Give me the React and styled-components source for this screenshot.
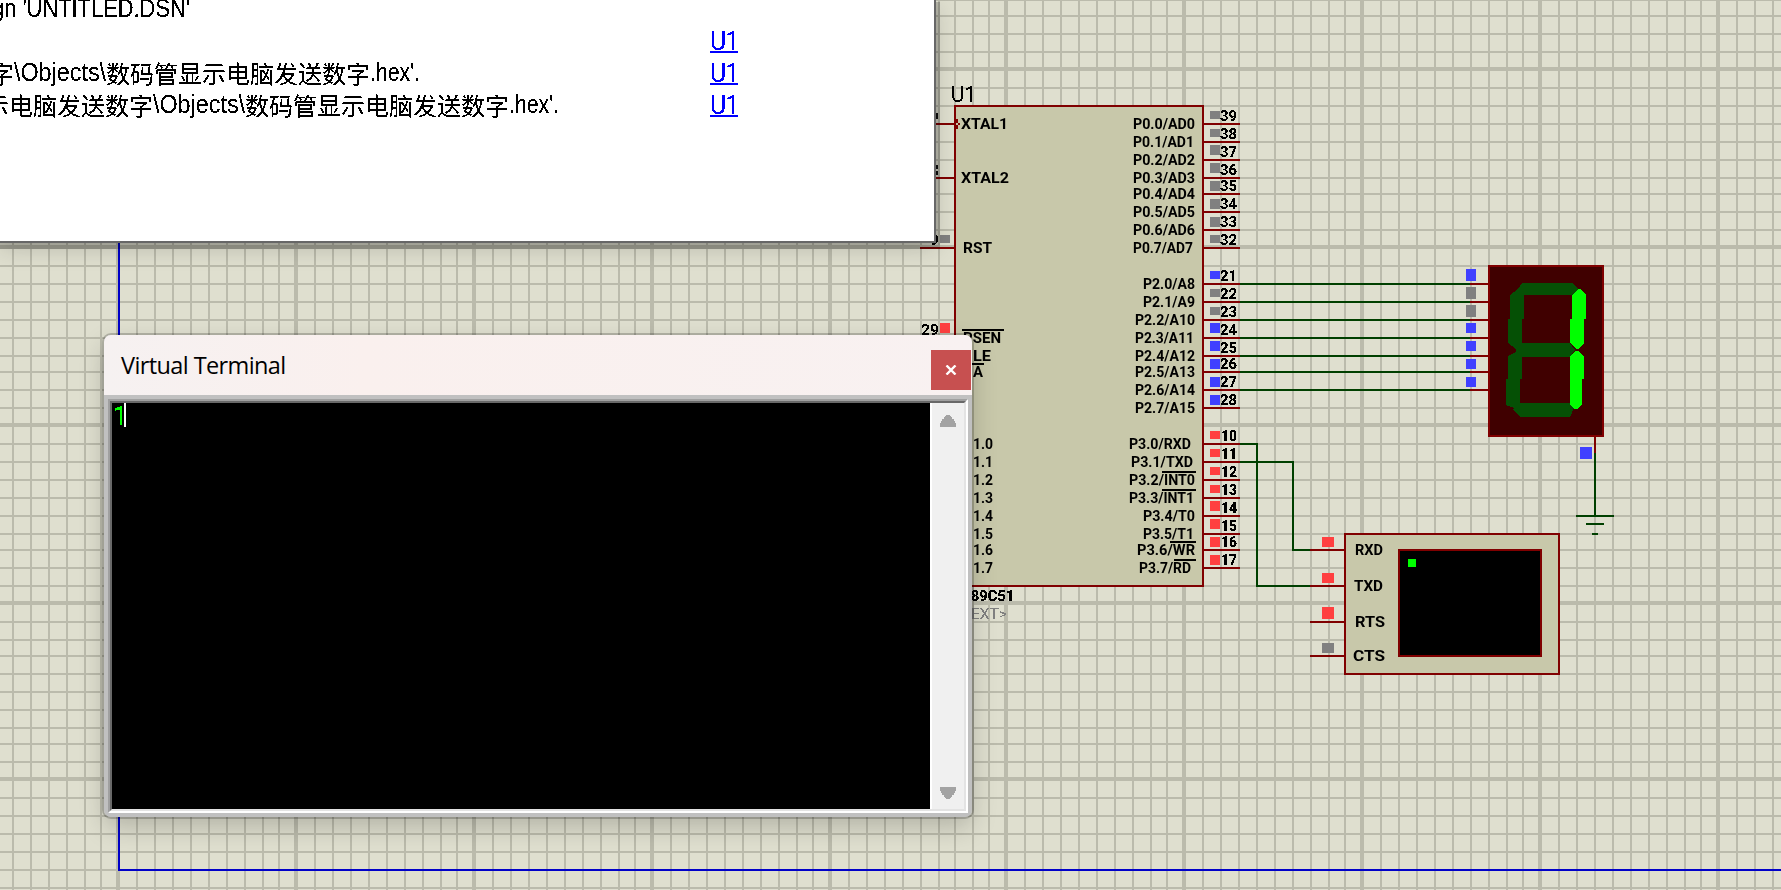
import React from "react";
import styled, { createGlobalStyle } from "styled-components";

const GlobalStyle = createGlobalStyle`
  html, body { margin: 0; padding: 0; overflow: hidden; background: #dfdfcf; }
`;

const MAROON = "#800000";
const WIRE = "#004000";
const BODY = "#c8c8aa";
const STATE = { r: "#ff4040", b: "#4040ff", g: "#808080" };

const Desktop = styled.main`
  position: relative;
  width: 1781px;
  height: 890px;
  overflow: hidden;
  background: #dfdfcf;
`;

const Sheet = styled.svg`
  display: block;
  shape-rendering: crispEdges;
`;

const Label = styled.text`
  font-family: Roboto, "Liberation Sans", sans-serif;
  font-size: ${(p) => p.$size || 14}px;
  font-weight: ${(p) => (p.$light ? 400 : 700)};
  fill: ${(p) => p.$color || "#000"};
`;

/* ---------- grid ---------- */
const MINOR = [19, 37, 55, 73, 91, 109, 127, 145, 161];
const MINOR_Y = [19, 37, 55, 73, 91, 109, 125, 143, 161];
const COLUMNS = [-60, 118, 296, 474, 652, 830, 1006, 1184, 1362, 1540, 1718].map((at) => ({
  at,
  minor: at === 830 ? [19, 37, 55, 73, 91, 109, 125, 143, 159] : MINOR,
}));
const ROWS = [-109, 69, 247, 425, 603, 779].map((at) => ({
  at,
  minor: at === 603 ? [19, 37, 53, 71, 89, 107, 125, 141, 159] : MINOR_Y,
}));

const Grid = () => (
  <g fill="#bbbbac">
    {COLUMNS.map(({ at, minor }) => (
      <g key={at}>
        <rect x={at - 2} y={0} width={4} height={890} />
        {minor.map((m) => (
          <rect key={m} x={at + m - 1} y={0} width={2} height={890} />
        ))}
      </g>
    ))}
    {ROWS.map(({ at, minor }) => (
      <g key={at}>
        <rect x={0} y={at - 2} width={1781} height={4} />
        {minor.map((m) => (
          <rect key={m} x={0} y={at + m - 1} width={1781} height={2} />
        ))}
      </g>
    ))}
  </g>
);

const Line = ({ d, color = WIRE }) => <path d={d} stroke={color} strokeWidth={2} fill="none" />;

const Fit = ({ x1, x2, y, children, ...rest }) => (
  <Label x={x1} y={y + 0.4} textLength={x2 - x1} lengthAdjust="spacingAndGlyphs" {...rest}>
    {children}
  </Label>
);

/* name, number, pin y, label left, label right, state, marker top, marker height, overbar start */
const PINS = [
  ["P0.0/AD0", 39, 124, 1133, 1195, "g", 111, 8],
  ["P0.1/AD1", 38, 142, 1133, 1194, "g", 129, 8],
  ["P0.2/AD2", 37, 160, 1133, 1195, "g", 145, 10],
  ["P0.3/AD3", 36, 178, 1133, 1195, "g", 163, 10],
  ["P0.4/AD4", 35, 194, 1133, 1195, "g", 181, 10],
  ["P0.5/AD5", 34, 212, 1133, 1195, "g", 199, 10],
  ["P0.6/AD6", 33, 230, 1133, 1195, "g", 217, 10],
  ["P0.7/AD7", 32, 248, 1133, 1193, "g", 235, 8],
  ["P2.0/A8", 21, 284, 1143, 1195, "b", 271, 8],
  ["P2.1/A9", 22, 302, 1143, 1195, "g", 289, 8],
  ["P2.2/A10", 23, 320, 1135, 1195, "g", 307, 8],
  ["P2.3/A11", 24, 338, 1135, 1194, "b", 323, 10],
  ["P2.4/A12", 25, 356, 1135, 1195, "b", 341, 10],
  ["P2.5/A13", 26, 372, 1135, 1195, "b", 359, 10],
  ["P2.6/A14", 27, 390, 1135, 1195, "b", 377, 10],
  ["P2.7/A15", 28, 408, 1135, 1195, "b", 395, 10],
  ["P3.0/RXD", 10, 444, 1129, 1191, "r", 431, 8],
  ["P3.1/TXD", 11, 462, 1131, 1193, "r", 449, 8],
  ["P3.2/INT0", 12, 480, 1129, 1195, "r", 467, 8, 1162],
  ["P3.3/INT1", 13, 498, 1129, 1194, "r", 485, 8, 1162],
  ["P3.4/T0", 14, 516, 1143, 1195, "r", 501, 10],
  ["P3.5/T1", 15, 534, 1143, 1194, "r", 519, 10],
  ["P3.6/WR", 16, 550, 1137, 1195, "r", 537, 10, 1170],
  ["P3.7/RD", 17, 568, 1139, 1191, "r", 555, 10, 1174],
];

const PORT1 = [444, 462, 480, 498, 516, 534, 550, 568];

const Microcontroller = () => (
  <g>
    <Line color={MAROON} d="M930 124H954M930 178H954M920 248H954" />
    <rect x={955} y={106} width={248} height={480} fill={BODY} stroke={MAROON} strokeWidth={2} />
    <path d="M956 119h2v4h2v2h-2v4h-2z" fill={MAROON} />
    <rect x={956} y={123} width={2} height={2} fill={BODY} />
    <Fit x1={951} x2={976} y={101.6} $light $size={22.5}>U1</Fit>
    <Fit x1={961} x2={1008} y={129}>XTAL1</Fit>
    <Fit x1={961} x2={1009} y={183}>XTAL2</Fit>
    <Fit x1={963} x2={992} y={253}>RST</Fit>
    <Line color="#000" d="M962 330H1004M962 364H984" />
    <Fit x1={963} x2={1001} y={343}>PSEN</Fit>
    <Fit x1={973} x2={991} y={361}>LE</Fit>
    <Fit x1={973} x2={983} y={377}>A</Fit>
    {PORT1.map((y, i) => (
      <Fit key={y} x1={973} x2={993} y={y + 5}>{`1.${i}`}</Fit>
    ))}
    <Fit x1={971} x2={1014} y={601}>89C51</Fit>
    <Fit x1={971} x2={1007} y={619} $light $color="#808080">EXT&gt;</Fit>

    <path d="M936 113h2v6h-2zM936 165h2v4h-2zM936 171h2v4h-2z" fill="#111" />
    <Fit x1={929} x2={939} y={245}>9</Fit>
    <rect x={940} y={235} width={10} height={8} fill={STATE.g} />
    <Fit x1={921} x2={939} y={335}>29</Fit>
    <rect x={940} y={323} width={10} height={10} fill={STATE.r} />

    {PINS.map(([name, num, y, x1, x2, state, top, h, bar]) => (
      <g key={num}>
        <Fit x1={x1} x2={x2} y={y + 5}>{name}</Fit>
        {bar && <Line color="#000" d={`M${bar} ${y - 8}H1196`} />}
        <Line color={MAROON} d={`M1204 ${y}H1240`} />
        <rect x={1210} y={top} width={10} height={h} fill={STATE[state]} />
        <Fit x1={num < 20 ? 1221 : 1220} x2={1237} y={y - 3}>{num}</Fit>
      </g>
    ))}
  </g>
);

const BUS = [
  [284, "b", 269, 12],
  [302, "g", 287, 12],
  [320, "g", 305, 12],
  [338, "b", 323, 10],
  [356, "b", 341, 10],
  [372, "b", 359, 10],
  [390, "b", 377, 10],
];

const SevenSegment = () => (
  <g>
    {BUS.map(([y, state, top, h]) => (
      <g key={y}>
        <Line d={`M1240 ${y}H1470`} />
        <Line color={MAROON} d={`M1470 ${y}H1488`} />
        <rect x={1466} y={top} width={10} height={h} fill={STATE[state]} />
      </g>
    ))}
    <rect x={1489} y={266} width={114} height={170} fill="#400000" stroke={MAROON} strokeWidth={2} />
    <g fill="#055005">
      <path d="M1522 283H1572L1578 289L1572 295H1524L1518 289Z" />
      <path d="M1518 289H1524V319H1522V343L1516 349L1508 343V319H1510V295Z" />
      <path d="M1522 343H1570L1575 350L1570 357H1522L1516 350Z" />
      <path d="M1514 353L1516 351L1522 357V379H1520V403L1514 408L1506 405V379H1508V356Z" />
      <path d="M1520 403H1570L1574 408L1570 417H1520L1513 409Z" />
    </g>
    <g fill="#00ff00">
      <path d="M1578 289H1580L1586 295V319H1584V343L1578 349H1576L1570 343V319H1572V295Z" />
      <path d="M1576 351H1578L1584 356V379H1582V405L1577 409H1574L1570 405V356Z" />
    </g>
    <Line color={MAROON} d="M1595 437V453" />
    <rect x={1580} y={447} width={12} height={12} fill={STATE.b} />
    <Line d="M1595 453V516M1576 516H1614M1586 524H1604M1592 534H1598" />
  </g>
);

const SERIAL = [
  ["RXD", 550, "r", 537, 10, 1355, 1383],
  ["TXD", 586, "r", 573, 10, 1354, 1383],
  ["RTS", 622, "r", 607, 12, 1355, 1385],
  ["CTS", 656, "g", 643, 10, 1353, 1385],
];

const SerialDevice = () => (
  <g>
    <Line d="M1240 444H1257V586H1310M1240 462H1293V550H1310" />
    <rect x={1345} y={534} width={214} height={140} fill={BODY} stroke={MAROON} strokeWidth={2} />
    <rect x={1399} y={550} width={142} height={106} fill="#000" stroke={MAROON} strokeWidth={2} />
    <rect x={1408} y={559} width={8} height={8} fill="#00ff00" />
    {SERIAL.map(([name, y, state, top, h, x1, x2]) => (
      <g key={name}>
        <Line color={MAROON} d={`M1310 ${y}H1344`} />
        <rect x={1322} y={top} width={12} height={h} fill={STATE[state]} />
        <Fit x1={x1} x2={x2} y={y + 5}>{name}</Fit>
      </g>
    ))}
  </g>
);

/* ---------- message log ---------- */
const LogWindow = styled.section`
  position: absolute;
  left: 0;
  top: 0;
  width: 934px;
  height: 241px;
  display: grid;
  grid-template-columns: 710px 1fr;
  grid-auto-rows: 32px;
  align-content: start;
  border-right: 2px solid #676767;
  border-bottom: 2px solid #676767;
  background: #fff;
  box-shadow: 2px 4px 0 2px rgba(0, 0, 0, 0.19), 0 6px 22px rgba(0, 0, 0, 0.16);
`;

const Message = styled.div`
  display: flex;
  margin: -8px 0 8px ${(p) => p.$shift || 0}px;
  line-height: 32px;
  white-space: pre;
  color: #000;
  filter: url(#crisp);
`;

const Latin = styled.span`
  flex: none;
  width: ${(p) => p.$width}px;
  font: 25px/32px "Liberation Sans", Arial, sans-serif;
  transform: scaleX(${(p) => p.$squeeze});
  transform-origin: 0 0;
`;

const Han = styled.span`
  flex: none;
  font: 24px/34px "Noto Sans CJK SC", sans-serif;
`;

const PartLink = styled.a`
  display: flex;
  justify-self: start;
  width: 28px;
  height: 20px;
  margin-top: -1px;
  border-bottom: 2px solid #00f;
  font: 25px/22px Roboto, "Liberation Sans", sans-serif;
  letter-spacing: -1px;
  color: #00f;
  filter: url(#crisp);
`;

const FolderTail = () => <Latin $width={92} $squeeze={0.933}>\Objects\</Latin>;
const HexTail = () => <Latin $width={50} $squeeze={0.85}>.hex'.</Latin>;

/* ---------- terminal ---------- */
const TerminalWindow = styled.section`
  position: absolute;
  left: 104px;
  top: 335px;
  width: 868px;
  height: 482px;
  display: flex;
  flex-direction: column;
  overflow: hidden;
  border-radius: 7px;
  background: #c0c0c0;
`;

const TerminalShadow = styled.div`
  position: absolute;
  left: 104px;
  top: 335px;
  width: 868px;
  height: 482px;
  border-radius: 7px;
  box-shadow: 0 0 0 2px rgba(0, 0, 0, 0.2), 0 10px 26px rgba(0, 0, 0, 0.2);
`;

const TitleBar = styled.header`
  display: flex;
  flex: none;
  height: 60px;
  justify-content: space-between;
  background: linear-gradient(90deg, #f6f1f1, #faf0ee 30%, #f8f1f1);
`;

const Title = styled.h1`
  margin: 0 0 0 17px;
  font: 400 23.5px/60px "Open Sans", "Noto Sans", sans-serif;
  letter-spacing: -0.6px;
  color: #000;
`;

const CloseButton = styled.button`
  display: grid;
  place-items: center;
  width: 40px;
  height: 40px;
  margin: 15px 1px 0 0;
  padding: 0;
  border: 0;
  background: #c75050;
`;

const Frame = styled.div`
  display: flex;
  flex: 1;
  margin: 4px;
  border: 2px solid;
  border-color: #a0a0a0 #fff #fff #a0a0a0;
`;

const FrameInner = styled.div`
  display: flex;
  flex: 1;
  border: 2px solid;
  border-color: #696969 #e3e3e3 #e3e3e3 #696969;
`;

const Screen = styled.div`
  display: flex;
  flex: 1;
  background: #000;
`;

const Output = styled.span`
  width: 12px;
  text-align: center;
  font: 25px/27px Roboto, "Liberation Sans", sans-serif;
  text-indent: 1px;
  color: #00ff00;
  filter: url(#crisp);
`;

const Caret = styled.i`
  width: 2px;
  height: 24px;
  background: #fff;
`;

const ScrollBar = styled.div`
  display: flex;
  flex-direction: column;
  justify-content: space-between;
  align-items: center;
  box-sizing: border-box;
  width: 34px;
  padding: 12px 0 10px;
  border-left: 2px solid #fff;
  background: #f0f0f0;
`;

const Arrow = ({ down }) => (
  <svg width="16" height="12" viewBox="0 0 16 12" fill="#a3a3a3">
    <path
      d="M6 0h4v1h1v1h1v2h2v2h1v2h1v4H0V8h1V6h1V4h2V2h1V1h1z"
      transform={down ? "rotate(180 8 6)" : undefined}
    />
  </svg>
);

export default function App() {
  return (
    <>
      <GlobalStyle />
      <Desktop>
        <Sheet width="1781" height="890" viewBox="0 0 1781 890">
          <defs>
            <filter id="crisp" colorInterpolationFilters="sRGB">
              <feComponentTransfer>
                <feFuncA type="discrete" tableValues="0 0 0 1 1 1 1" />
              </feComponentTransfer>
            </filter>
          </defs>
          <Grid />
          <Line color="#0000c8" d="M119 0V870H1781" />
          <g filter="url(#crisp)">
            <Microcontroller />
            <SevenSegment />
            <SerialDevice />
          </g>
        </Sheet>

        <LogWindow>
          <Message $shift={-8}>
            <Latin $width={198} $squeeze={0.875}>gn 'UNTITLED.DSN'</Latin>
          </Message>
          <span />
          <span />
          <PartLink>U1</PartLink>
          <Message $shift={-10}>
            <Han>字</Han><FolderTail /><Han>数码管显示电脑发送数字</Han><HexTail />
          </Message>
          <PartLink>U1</PartLink>
          <Message $shift={-15}>
            <Han>示电脑发送数字</Han><FolderTail /><Han>数码管显示电脑发送数字</Han><HexTail />
          </Message>
          <PartLink>U1</PartLink>
        </LogWindow>

        <TerminalShadow />
        <TerminalWindow>
          <TitleBar>
            <Title>Virtual Terminal</Title>
            <CloseButton aria-label="Close">
              <svg width="12" height="10" viewBox="0 0 12 10">
                <path d="M1.5 0.5L10.5 9.5M10.5 0.5L1.5 9.5" stroke="#fff" strokeWidth="2.4" />
              </svg>
            </CloseButton>
          </TitleBar>
          <Frame>
            <FrameInner>
              <Screen>
                <Output>1</Output>
                <Caret />
              </Screen>
              <ScrollBar>
                <Arrow />
                <Arrow down />
              </ScrollBar>
            </FrameInner>
          </Frame>
        </TerminalWindow>
      </Desktop>
    </>
  );
}
